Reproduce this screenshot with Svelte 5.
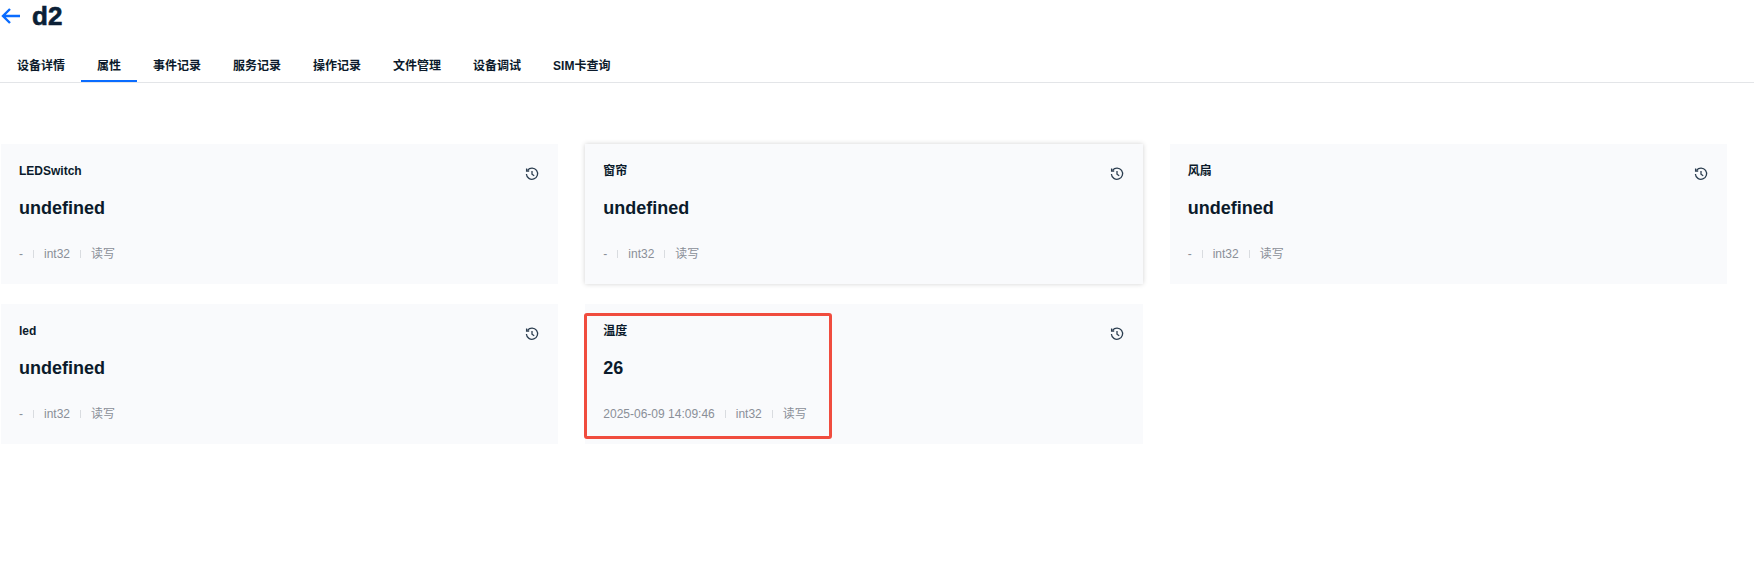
<script>
  let tabs = ["设备详情", "属性", "事件记录", "服务记录", "操作记录", "文件管理", "设备调试", "SIM卡查询"];
  let active = 1;
  let props = [
    { name: "LEDSwitch", value: "undefined", time: "-" },
    { name: "窗帘", value: "undefined", time: "-", hover: true },
    { name: "风扇", value: "undefined", time: "-" },
    { name: "led", value: "undefined", time: "-" },
    { name: "温度", value: "26", time: "2025-06-09 14:09:46", marked: true },
  ];
</script>

<main>
  <header class="head">
    <svg class="back" width="19" height="16" viewBox="0 0 19 16" fill="none" stroke="#0a6cff" stroke-width="2.4">
      <path d="M19 8H2M9 1L2 8l7 7" />
    </svg>
    <h1>d2</h1>
  </header>

  <nav class="tabs">
    {#each tabs as tab, i}
      <div class="tab" class:active={i === active}>{tab}</div>
    {/each}
  </nav>

  <section class="grid">
    {#each props as p}
      <div class="card" class:hover={p.hover}>
        <div class="top">
          <span class="name">{p.name}</span>
          <svg class="hist" width="14" height="14" viewBox="0 0 14 14" fill="none" stroke="#2c3e50" stroke-width="1.3">
            <path d="M2.6 3.2A5.6 5.6 0 1 1 1.4 7" />
            <path d="M1.6 1.4v2.6h2.6" />
            <path d="M7 4v3.2l2.2 1.6" />
          </svg>
        </div>
        <div class="value">{p.value}</div>
        <div class="meta">
          <span>{p.time}</span><i></i><span>int32</span><i></i><span>读写</span>
        </div>
        {#if p.marked}
          <div class="mark"></div>
        {/if}
      </div>
    {/each}
  </section>
</main>

<style>
  :global(body) {
    margin: 0;
    background: #fff;
  }
  main {
    height: 572px;
    overflow: hidden;
    font-family: "Liberation Sans", "Noto Sans CJK SC", sans-serif;
    color: #0b1a2b;
  }
  .head {
    display: flex;
    align-items: center;
    gap: 12px;
    height: 32px;
    padding-left: 1px;
  }
  .back {
    flex: none;
  }
  h1 {
    margin: 0;
    font-size: 26px;
    line-height: 32px;
    font-weight: 700;
    color: #0b1f36;
    -webkit-text-stroke: 0.6px #0b1f36;
  }
  .tabs {
    display: flex;
    margin-top: 17px;
    padding-left: 1px;
    height: 33px;
    border-bottom: 1px solid #e3e5e8;
  }
  .tab {
    padding: 0 16px;
    font-size: 12px;
    font-weight: 700;
    line-height: 34px;
    height: 33px;
    box-sizing: border-box;
  }
  .tab.active {
    border-bottom: 2px solid #0a6cff;
  }
  .grid {
    display: grid;
    grid-template-columns: repeat(3, 1fr);
    column-gap: 27px;
    row-gap: 20px;
    margin-top: 61px;
    width: 1726px;
    padding-left: 1px;
  }
  .card {
    position: relative;
    height: 140px;
    box-sizing: border-box;
    padding: 20px 19px 0 18px;
    background: #f9fafc;
  }
  .card.hover {
    box-shadow: 0 0 5px rgba(0, 0, 0, 0.18);
  }
  .top {
    display: flex;
    justify-content: space-between;
    align-items: flex-start;
    height: 32px;
  }
  .name {
    font-size: 12px;
    font-weight: 700;
    line-height: 14px;
  }
  .hist {
    margin: 3px 0 0;
  }
  .value {
    font-size: 18px;
    font-weight: 700;
    line-height: 24px;
  }
  .meta {
    display: flex;
    align-items: center;
    margin-top: 25px;
    font-size: 12px;
    line-height: 18px;
    color: #8a8f98;
  }
  .meta i {
    width: 1px;
    height: 8px;
    margin: 0 10px;
    background: #d9dce0;
  }
  .mark {
    position: absolute;
    left: -1px;
    top: 9px;
    width: 248px;
    height: 126px;
    box-sizing: border-box;
    border: 3px solid #f04c3e;
    border-radius: 3px;
  }
</style>
